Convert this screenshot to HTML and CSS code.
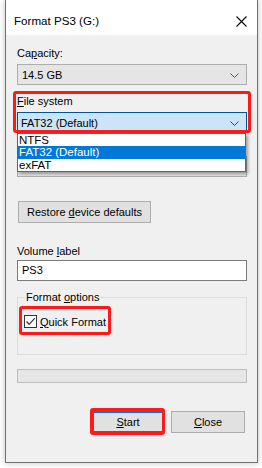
FILE: index.html
```html
<!DOCTYPE html>
<html>
<head>
<meta charset="utf-8">
<link rel="stylesheet" href="styles.css">
</head>
<body>
<div class="window">
  <div class="titlebar">
    <span class="title">Format PS3 (G:)</span>
    <svg class="close" width="11" height="11" viewBox="0 0 11 11"><path d="M0.5 0.5 L10.5 10.5 M10.5 0.5 L0.5 10.5" stroke="#000" stroke-width="1.1" fill="none"/></svg>
  </div>
  <div class="content">
    <div class="label lbl-cap">Ca<u>p</u>acity:</div>
    <div class="combo">
      <span>14.5 GB</span>
      <svg class="chev" width="9" height="5" viewBox="0 0 9 5"><path d="M0.5 0.5 L4.5 4.5 L8.5 0.5" stroke="#555" fill="none"/></svg>
    </div>

    <div class="fs-wrap">
      <div class="label"><u>F</u>ile system</div>
      <div class="combo combo-active">
        <span>FAT32 (Default)</span>
        <svg class="chev" width="9" height="5" viewBox="0 0 9 5"><path d="M0.5 0.5 L4.5 4.5 L8.5 0.5" stroke="#444" fill="none"/></svg>
      </div>
      <div class="hl hl-fs"></div>
      <ul class="dropdown">
        <li>NTFS</li>
        <li class="sel">FAT32 (Default)</li>
        <li>exFAT</li>
      </ul>
    </div>

    <div class="label lbl-alloc"></div>
    <div class="combo combo-alloc"></div>

    <button class="btn btn-restore">Restore <u>d</u>evice defaults</button>

    <div class="label lbl-vol">Volume <u>l</u>abel</div>
    <div class="input">PS3</div>

    <fieldset class="group">
      <legend>Format <u>o</u>ptions</legend>
      <div class="check-row">
        <span class="checkbox">
          <svg width="11" height="11" viewBox="0 0 11 11"><path d="M1.5 5.5 L4.2 8.3 L9.8 2.2" stroke="#333" stroke-width="1.2" fill="none"/></svg>
        </span>
        <span class="check-label"><u>Q</u>uick Format</span>
        <div class="hl hl-quick"></div>
      </div>
    </fieldset>

    <div class="progress"></div>

    <div class="actions">
      <div class="start-wrap">
        <button class="btn btn-start"><u>S</u>tart</button>
        <div class="hl hl-start"></div>
      </div>
      <button class="btn btn-close"><u>C</u>lose</button>
    </div>
  </div>
</div>
</body>
</html>
```

FILE: styles.css
```css
* { box-sizing: border-box; }
html, body {
  margin: 0;
  padding: 0;
  background: #ffffff;
  width: 262px;
  height: 468px;
  overflow: hidden;
}
body {
  font-family: "Liberation Sans", Arial, sans-serif;
  font-size: 11px;
  color: #000;
}
.window {
  margin-left: 5px;
  width: 253px;
  height: 463px;
  border: 1px solid #707070;
  border-top: none;
  background: #f0f0f0;
  box-shadow: 0 0 6px rgba(0,0,0,0.25);
  display: flex;
  flex-direction: column;
}
.titlebar {
  height: 35px;
  background: #ffffff;
  display: flex;
  align-items: flex-start;
  justify-content: space-between;
  padding: 0 10px 0 8px;
  flex-shrink: 0;
}
.title {
  font-size: 11.6px;
  line-height: 14px;
  margin-top: 14px;
}
.close { margin-top: 16px; }
.content {
  position: relative;
  padding: 0 10px 0 11px;
  display: flex;
  flex-direction: column;
  flex: 1;
}
.label {
  font-size: 11px;
  line-height: 14px;
  height: 14px;
}
u { text-decoration: underline; text-underline-offset: 1px; }
.lbl-cap { margin-top: 11px; }
.combo {
  margin-top: 4px;
  height: 21px;
  border: 1px solid #adadad;
  background: #e5e5e5;
  display: flex;
  align-items: center;
  justify-content: space-between;
  padding: 0 7px 0 4px;
  font-size: 11px;
}
.chev { margin-top: 1px; }
.fs-wrap {
  position: relative;
  margin-top: 9px;
}
.combo-active {
  background: #cce4f7;
  border-color: #005499;
  padding-left: 3px;
}
.hl {
  position: absolute;
  border: 3px solid #ff1a1a;
  border-radius: 3px;
  pointer-events: none;
}
.hl-fs {
  left: -4px;
  top: -3px;
  width: 238px;
  height: 42px;
}
.dropdown {
  position: absolute;
  left: 0;
  top: 39px;
  width: 229px;
  margin: 0;
  padding: 0;
  list-style: none;
  background: #fff;
  border: 1px solid #646464;
  box-shadow: 2px 2px 3px rgba(0,0,0,0.35);
  z-index: 2;
  font-size: 11.5px;
}
.dropdown li {
  height: 12.3px;
  line-height: 12px;
  padding-left: 1px;
}
.dropdown li.sel {
  background: #0078d7;
  color: #fff;
}
.lbl-alloc { margin-top: 5px; }
.combo-alloc { margin-top: 4px; }
.btn {
  font-family: inherit;
  font-size: 11px;
  color: #000;
  background: #e1e1e1;
  border: 1px solid #adadad;
  padding: 0;
  height: 22px;
  line-height: 19px;
}
.btn-restore {
  margin-top: 24px;
  width: 133px;
  margin-left: 1px;
}
.lbl-vol { margin-top: 21px; }
.input {
  margin-top: 2px;
  height: 21px;
  background: #fff;
  border: 1px solid #7a7a7a;
  padding-left: 4px;
  line-height: 19px;
  font-size: 11px;
}
.group {
  margin: 9px 0 0 0;
  padding: 0 0 0 6px;
  border: 1px solid #dcdcdc;
  height: 65px;
  position: relative;
}
.group legend {
  padding: 0 1px;
  margin-left: 1px;
  font-size: 11px;
  line-height: 14px;
}
.check-row {
  position: relative;
  display: flex;
  align-items: center;
  margin-top: 11px;
  height: 13px;
}
.checkbox {
  width: 13px;
  height: 13px;
  border: 1px solid #333;
  background: #fff;
  display: flex;
  align-items: center;
  justify-content: center;
}
.check-label {
  margin-left: 3px;
  font-size: 11px;
}
.hl-quick {
  left: -5px;
  top: -9px;
  width: 92px;
  height: 29px;
}
.progress {
  margin-top: 14px;
  height: 14px;
  background: #e6e6e6;
  border: 1px solid #bcbcbc;
}
.actions {
  margin-top: 28px;
  display: flex;
  justify-content: flex-end;
  gap: 7px;
  padding-right: 2px;
}
.start-wrap { position: relative; }
.btn-start {
  width: 72px;
  height: 22px;
  border: 2px solid #0078d7;
  display: block;
}
.hl-start {
  left: -2px;
  top: -3px;
  width: 75px;
  height: 27px;
}
.btn-close {
  width: 74px;
  height: 22px;
}
```
